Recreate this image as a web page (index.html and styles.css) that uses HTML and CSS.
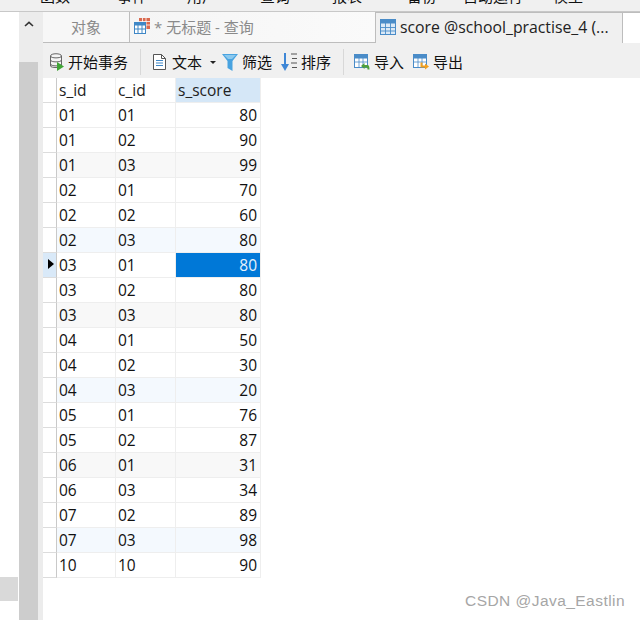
FILE: index.html
```html
<!DOCTYPE html>
<html lang="zh">
<head>
<meta charset="utf-8">
<title>score @school_practise_4</title>
<link rel="stylesheet" href="styles.css">
</head>
<body>
<div class="menubar">
  <span class="m m1">函数</span><span class="m m2">事件</span><span class="m m3">用户</span><span class="m m4">查询</span><span class="m m5">报表</span><span class="m m6">备份</span><span class="m m7">自动运行</span><span class="m m8">模型</span>
</div>
<div class="app">
  <div class="outer"><div class="outer-thumb"></div></div>
  <div class="scroll">
    <div class="scroll-up"><svg width="10" height="6" viewBox="0 0 10 6"><path d="M1 5 L5 1.300 L9 5" fill="none" stroke="#333" stroke-width="1.600"/></svg></div>
    <div class="scroll-thumb"></div>
  </div>
  <div class="strip"></div>
  <div class="main">
    <div class="tabs">
      <div class="tab tab-obj">对象</div>
      <div class="tab tab-query">
        <svg width="17" height="17" viewBox="0 0 17 17"><rect x="5" y="0" width="11" height="11" fill="#d9694f"/><path d="M5 3.500H16M8.500 0V11M12 0V11M5 7H16" stroke="#fff" stroke-width=".8"/><rect x="0.500" y="4.500" width="11" height="11" fill="#fff" stroke="#3f87c6"/><rect x="0.500" y="4.500" width="11" height="3" fill="#3f87c6"/><path d="M0 11H12M4 5V16M8 5V16" stroke="#3f87c6"/></svg>
        <span>* 无标题 - 查询</span>
      </div>
      <div class="tab tab-active">
        <svg width="16" height="16" viewBox="0 0 16 16"><rect x=".5" y=".5" width="15" height="15" fill="#dbe9f6" stroke="#4a8cc8"/><rect x=".5" y=".5" width="15" height="4" fill="#4a8cc8"/><path d="M0 8.500H16M0 12H16M5.500 4V16M10.500 4V16" stroke="#4a8cc8" stroke-width=".9"/></svg>
        <span>score @school_practise_4 (...</span>
      </div>
      <div class="tab-rest"></div>
    </div>
    <div class="toolbar">
      <div class="tool t-begin">
        <svg width="16" height="18" viewBox="0 0 16 18"><path d="M1.500 3c0-3 11-3 11 0v10c0 2-11 2-11 0z" fill="#f4f4f4" stroke="#666"/><path d="M1.500 3c0 2.500 11 2.500 11 0M1.500 7c0 2.500 11 2.500 11 0M1.500 11c0 2.500 11 2.500 11 0" fill="none" stroke="#666"/><path d="M8 9l7 4.500L8 18z" fill="#3fa535"/></svg>
        <span>开始事务</span>
      </div>
      <div class="sep"></div>
      <div class="tool t-text">
        <svg width="13" height="16" viewBox="0 0 13 16"><path d="M.5.500H8.500L12.500 4.500V15.500H.5z" fill="#fff" stroke="#555"/><path d="M8.500.500V4.500H12.500" fill="none" stroke="#555"/><path d="M3 6.500H10M3 9H10M3 11.500H10" stroke="#3f87c6"/></svg>
        <span>文本</span>
        <i class="caret"></i>
      </div>
      <div class="tool t-filter">
        <svg width="16" height="17" viewBox="0 0 16 17"><path d="M0 0H16L10.500 7V17L5.500 14V7z" fill="#49a3e0"/><path d="M2 1H14L10 5H6z" fill="#8cc9ee"/></svg>
        <span>筛选</span>
      </div>
      <div class="tool t-sort">
        <svg width="16" height="18" viewBox="0 0 16 18"><path d="M4 0V13" stroke="#3f87d6" stroke-width="2"/><path d="M0 11H8L4 18z" fill="#3f87d6"/><path d="M10 1H16M11 5.500H16M10 10H16M11 14.500H16" stroke="#555"/></svg>
        <span>排序</span>
      </div>
      <div class="sep"></div>
      <div class="tool t-import">
        <svg width="16" height="16" viewBox="0 0 16 16"><rect x=".5" y=".5" width="13" height="13" fill="#fff" stroke="#4a8cc8"/><rect x=".5" y=".5" width="13" height="4" fill="#4a8cc8"/><path d="M0 8H13M5 4V14M9 4V14" stroke="#4a8cc8" stroke-width=".8"/><path d="M7 12L10.500 9V11H13.500C15 11 15.500 13 15.500 15.500H13.500C13.500 14 13 13.500 12 13.500H10.500V15z" fill="#4fa03c"/></svg>
        <span>导入</span>
      </div>
      <div class="tool t-export">
        <svg width="16" height="16" viewBox="0 0 16 16"><rect x=".5" y=".5" width="13" height="13" fill="#fff" stroke="#4a8cc8"/><rect x=".5" y=".5" width="13" height="4" fill="#4a8cc8"/><path d="M0 8H13M5 4V14M9 4V14" stroke="#4a8cc8" stroke-width=".8"/><path d="M7.500 8.500H9.500V11.500H12V9.500L16 12.500L12 15.500V13.500H7.500z" fill="#f2a01e"/></svg>
        <span>导出</span>
      </div>
    </div>
    <table class="grid">
      <colgroup><col class="c0"><col class="c1"><col class="c2"><col class="c3"></colgroup>
      <thead><tr><th class="rh"></th><th>s_id</th><th>c_id</th><th class="hsel">s_score</th></tr></thead>
      <tbody>
        <tr><td class="rh"></td><td>01</td><td>01</td><td class="n">80</td></tr>
        <tr><td class="rh"></td><td>01</td><td>02</td><td class="n">90</td></tr>
        <tr class="alt"><td class="rh"></td><td>01</td><td>03</td><td class="n">99</td></tr>
        <tr><td class="rh"></td><td>02</td><td>01</td><td class="n">70</td></tr>
        <tr><td class="rh"></td><td>02</td><td>02</td><td class="n">60</td></tr>
        <tr class="alt2"><td class="rh"></td><td>02</td><td>03</td><td class="n">80</td></tr>
        <tr><td class="rh cur"><i class="arrow"></i></td><td>03</td><td>01</td><td class="n sel">80</td></tr>
        <tr><td class="rh"></td><td>03</td><td>02</td><td class="n">80</td></tr>
        <tr class="alt"><td class="rh"></td><td>03</td><td>03</td><td class="n">80</td></tr>
        <tr><td class="rh"></td><td>04</td><td>01</td><td class="n">50</td></tr>
        <tr><td class="rh"></td><td>04</td><td>02</td><td class="n">30</td></tr>
        <tr class="alt2"><td class="rh"></td><td>04</td><td>03</td><td class="n">20</td></tr>
        <tr><td class="rh"></td><td>05</td><td>01</td><td class="n">76</td></tr>
        <tr><td class="rh"></td><td>05</td><td>02</td><td class="n">87</td></tr>
        <tr class="alt"><td class="rh"></td><td>06</td><td>01</td><td class="n">31</td></tr>
        <tr><td class="rh"></td><td>06</td><td>03</td><td class="n">34</td></tr>
        <tr><td class="rh"></td><td>07</td><td>02</td><td class="n">89</td></tr>
        <tr class="alt2"><td class="rh"></td><td>07</td><td>03</td><td class="n">98</td></tr>
        <tr><td class="rh"></td><td>10</td><td>10</td><td class="n">90</td></tr>
      </tbody>
    </table>
  </div>
</div>
<div class="watermark">CSDN @Java_Eastlin</div>
</body>
</html>
```
FILE: styles.css
```css
html, body {
  margin: 0;
  padding: 0;
  height: 620px;
  overflow: hidden;
  background: #fff;
  font-family: "Open Sans", "Noto Sans CJK SC", sans-serif;
  color: #111;
}

.menubar {
  height: 11px;
  background: #f0f0f0;
  border-bottom: 1px solid #c8c8c8;
  display: flex;
  align-items: flex-start;
  overflow: hidden;
  font-size: 15px;
  line-height: 15px;
}
.m { flex: none; white-space: nowrap; margin-top: -11px; }
.m1 { margin-left: 40px; width: 77px; }
.m2 { width: 70px; }
.m3 { width: 73px; }
.m4 { width: 72px; }
.m5 { width: 75px; }
.m6 { width: 56px; }
.m7 { width: 90px; }

.app { display: flex; height: 608px; }
.outer { width: 19px; display: flex; flex-direction: column; justify-content: flex-end; padding-bottom: 19px; box-sizing: border-box; }
.outer-thumb { height: 24px; width: 18px; background: #d9d9d9; }
.scroll { width: 19px; background: #ececec; display: flex; flex-direction: column; }
.scroll-up { height: 50px; display: flex; justify-content: center; padding-top: 9px; box-sizing: border-box; }
.scroll-thumb { flex: 1; background: #cdcdcd; }
.strip { width: 5px; background: #ececec; }
.main { flex: 1; min-width: 0; }

.tabs { display: flex; height: 31px; background: #fff; font-size: 15px; }
.tab { box-sizing: border-box; display: flex; align-items: center; white-space: nowrap; padding-bottom: 2px; }
.tab-obj {
  width: 87px;
  justify-content: center;
  color: #8a8a8a;
  background: #f7f7f7;
  border-right: 1px solid #bdbdbd;
  border-bottom: 1px solid #bdbdbd;
}
.tab-query {
  width: 246px;
  gap: 3px;
  padding-left: 4px;
  color: #8a8a8a;
  background: linear-gradient(90deg, #f5f5f5, #fafafa);
  border-right: 1px solid #bdbdbd;
  border-bottom: 1px solid #bdbdbd;
}
.tab-active {
  width: 247px;
  gap: 4px;
  padding-left: 4px;
  background: #f0f0f0;
  color: #222;
  border-right: 1px solid #bdbdbd;
  border-top: 1px solid #bdbdbd;
  font-size: 15.800px;
}
.tab-rest { flex: 1; border-top: 1px solid #bdbdbd; }

.toolbar {
  height: 35px;
  background: #f0f0f0;
  display: flex;
  align-items: center;
  font-size: 15px;
  line-height: 22px;
  padding-top: 3px;
  box-sizing: border-box;
}
.tool { display: flex; align-items: center; white-space: nowrap; flex: none; gap: 4px; }
.t-begin { margin-left: 6px; gap: 3px; }
.sep { width: 1px; height: 26px; background: #d8d8d8; flex: none; }
.toolbar .sep:nth-child(2) { margin-left: 12px; }
.t-text { margin-left: 12px; gap: 6px; }
.caret { width: 0; height: 0; border: 3px solid transparent; border-top: 3px solid #222; border-bottom: 0; margin-left: 2px; }
.t-filter { margin-left: 6px; }
.t-sort { margin-left: 9px; }
.toolbar .sep:nth-child(6) { margin-left: 12px; }
.t-import { margin-left: 10px; }
.t-export { margin-left: 9px; }

.grid {
  border-collapse: separate;
  border-spacing: 0;
  table-layout: fixed;
  width: 218px;
  font-size: 15.500px;
}
.c0 { width: 14px; }
.c1 { width: 59px; }
.c2 { width: 60px; }
.c3 { width: 85px; }
.grid th, .grid td {
  box-sizing: border-box;
  height: 25px;
  padding: 1px 3px 0 2px;
  font-weight: 400;
  text-align: left;
  border-right: 1px solid #eeeeee;
  border-bottom: 1px solid #eeeeee;
  white-space: nowrap;
  line-height: 23px;
}
.grid th { height: 25px; background: #fff; color: #222; }
.grid .hsel { background: #d5e7f7; }
.grid .rh { background: #fff; padding: 0; border-right: 1px solid #c9c9c9; border-bottom: 1px solid #dcdcdc; position: relative; }
.grid .cur { background: #d9e9f8; }
.arrow {
  position: absolute;
  left: 5px;
  top: 6px;
  width: 0;
  height: 0;
  border-left: 6px solid #000;
  border-top: 5.500px solid transparent;
  border-bottom: 5.500px solid transparent;
}
.grid .n { text-align: right; }
.alt td:not(.rh) { background: #f8f8f8; }
.alt2 td:not(.rh) { background: #f4f9fe; }
.grid .sel { background: #0078d7; color: #e8f2fb; }

.watermark {
  position: absolute;
  right: 15px;
  bottom: 10px;
  font-family: "Liberation Sans", sans-serif;
  font-size: 15.500px;
  letter-spacing: .45px;
  color: #a6a6a6;
}
```
